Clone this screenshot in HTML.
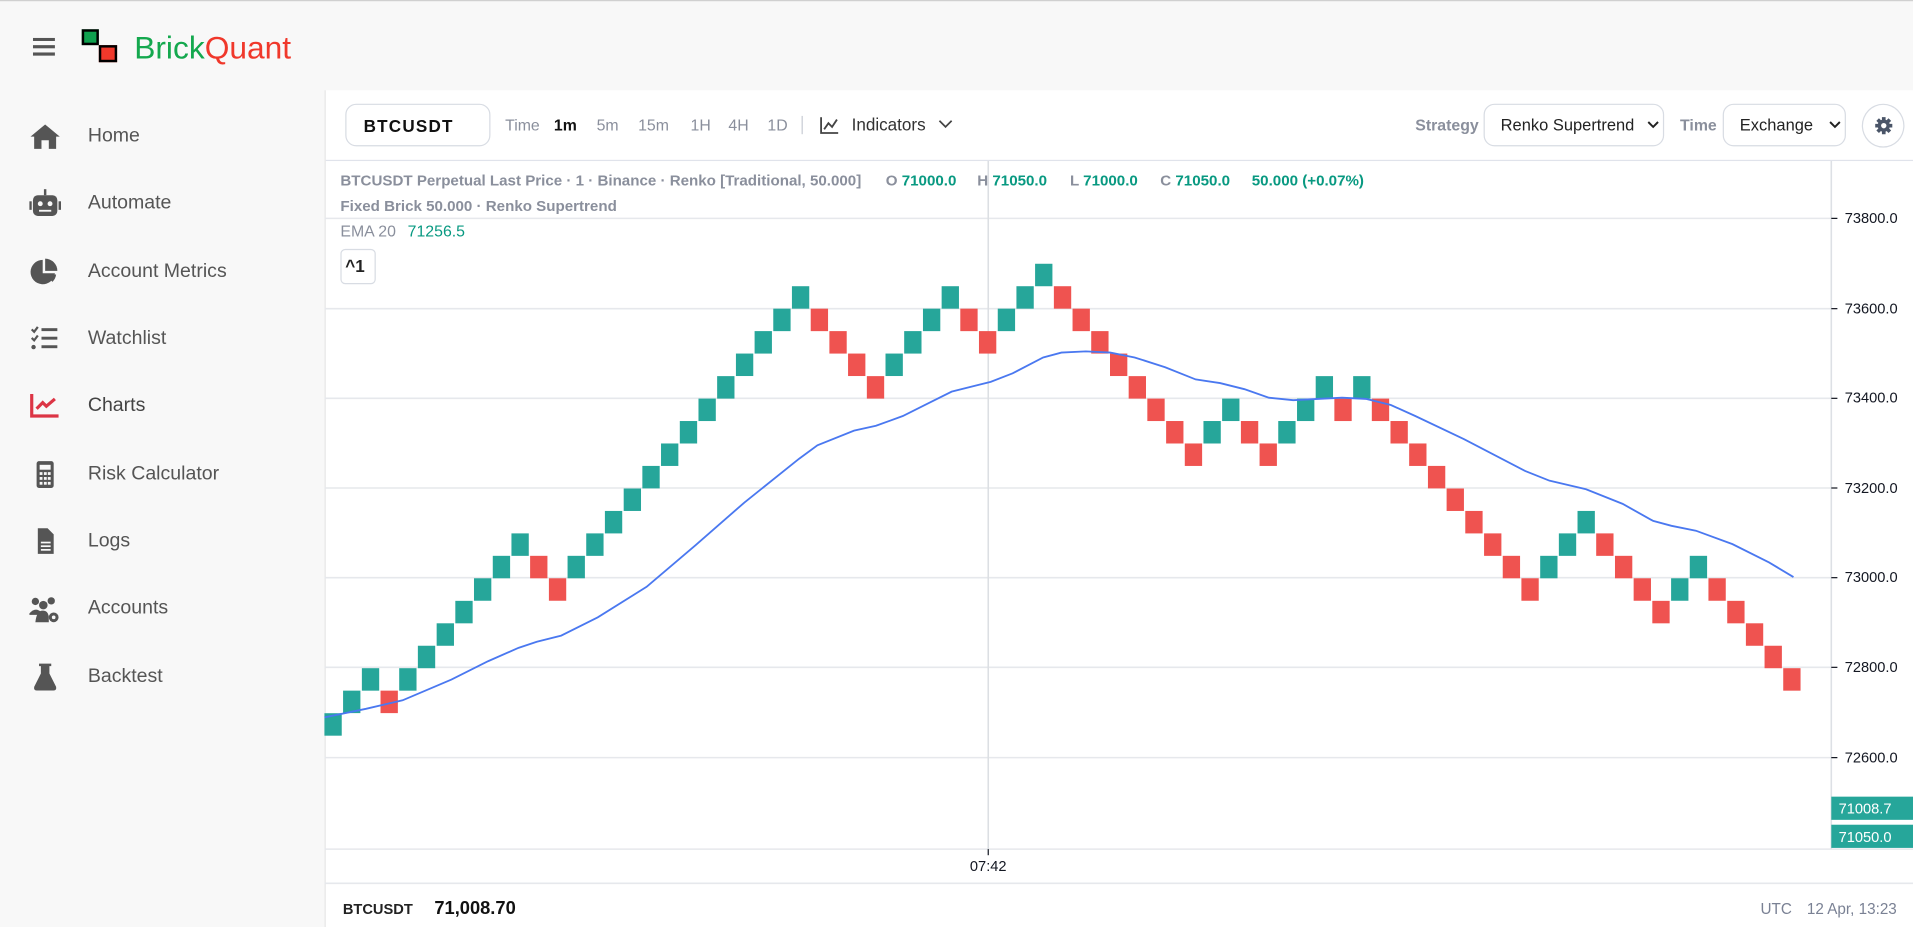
<!DOCTYPE html>
<html><head><meta charset="utf-8"><style>
*{box-sizing:border-box;margin:0;padding:0}
html,body{width:1913px;height:925px;overflow:hidden;background:#f8f8f8;font-family:"Liberation Sans",sans-serif}
#w{position:absolute;left:0;top:0;width:1568px;height:758.2px;transform:scale(1.22005,1.22);transform-origin:0 0;background:#f8f8f8;border-top:1px solid #d0d0d0}
.a{position:absolute;white-space:nowrap}
.nav{position:absolute;left:0;width:260px;height:40px}
.nav .t{position:absolute;left:72px;top:11px;font-size:16px;color:#555}
.nav svg{position:absolute;left:24px;top:8px}
#main{position:absolute;left:266px;top:73px;width:1302px;height:686px;background:#fff;border-left:1px solid #e6e6e6}
.g{color:#8a8f9c}
.tf{position:absolute;top:21px;font-size:13px;color:#8a8f9c}
.sel{position:absolute;top:11px;height:35px;border:1px solid #d8dce3;border-radius:9px;font-size:13.5px;color:#222;padding:9px 0 0 13px}
.leg{position:absolute;font-size:12.4px;font-weight:bold;color:#8a8f9c}
.gr{color:#089981}
</style></head><body><div id="w">
<svg class="a" style="left:27px;top:30px" width="19" height="15"><rect x="0" y="0" width="18" height="2.6" fill="#555"/><rect x="0" y="6" width="18" height="2.6" fill="#555"/><rect x="0" y="12" width="18" height="2.6" fill="#555"/></svg>
<div class="a" style="left:67px;top:23px;width:14px;height:13px;background:#0fa14f;border:2px solid #000"></div>
<div class="a" style="left:81px;top:36px;width:15px;height:14px;background:#f0382b;border:2px solid #000"></div>
<div class="a" style="left:110px;top:22px;font-size:26px;line-height:32px"><span style="color:#14a84e">Brick</span><span style="color:#f0382b">Quant</span></div>
<div class="nav" style="top:91px"><svg width="26" height="24" viewBox="0 0 26 24"><path d="M13 2 L1 12 H4 V22 H10 V15 H16 V22 H22 V12 H25 Z" fill="#555"/></svg><div class="t">Home</div></div>
<div class="nav" style="top:146px"><svg width="26" height="24" viewBox="0 0 26 24"><rect x="12" y="0" width="2" height="5" fill="#555"/><rect x="3" y="5" width="20" height="17" rx="4" fill="#555"/><rect x="0" y="10" width="2" height="7" fill="#555"/><rect x="24" y="10" width="2" height="7" fill="#555"/><circle cx="9" cy="12" r="2" fill="#f8f8f8"/><circle cx="17" cy="12" r="2" fill="#f8f8f8"/><rect x="8" y="17" width="10" height="1.5" fill="#f8f8f8"/></svg><div class="t">Automate</div></div>
<div class="nav" style="top:202px"><svg width="26" height="24" viewBox="0 0 26 24"><path d="M11 2 A10 10 0 1 0 21 13 H11 Z" fill="#555"/><path d="M13 1 A10 10 0 0 1 23 11 H13Z" fill="#555"/><path d="M13 14 H22 A10 10 0 0 1 19 20 Z" fill="#555"/></svg><div class="t">Account Metrics</div></div>
<div class="nav" style="top:257px"><svg width="26" height="24" viewBox="0 0 26 24"><path d="M2 4 L4 6 L7 2" stroke="#555" stroke-width="1.8" fill="none"/><path d="M2 11 L4 13 L7 9" stroke="#555" stroke-width="1.8" fill="none"/><circle cx="3.5" cy="18.5" r="1.8" fill="#555"/><rect x="10" y="3" width="13" height="2.4" fill="#555"/><rect x="10" y="10" width="13" height="2.4" fill="#555"/><rect x="10" y="17" width="13" height="2.4" fill="#555"/></svg><div class="t">Watchlist</div></div>
<div class="nav" style="top:312px"><svg width="26" height="24" viewBox="0 0 26 24"><path d="M2 2 V20 H24" stroke="#dc3545" stroke-width="2.6" fill="none"/><path d="M6 14 L11 9 L14 12 L21 6" stroke="#dc3545" stroke-width="2.6" fill="none"/></svg><div class="t" style="color:#444">Charts</div></div>
<div class="nav" style="top:368px"><svg width="26" height="24" viewBox="0 0 26 24"><rect x="6" y="1" width="14" height="22" rx="2" fill="#555"/><rect x="8.5" y="4" width="9" height="4" fill="#f8f8f8"/><g fill="#f8f8f8"><rect x="8.5" y="10" width="2.3" height="2.3"/><rect x="12" y="10" width="2.3" height="2.3"/><rect x="15.2" y="10" width="2.3" height="2.3"/><rect x="8.5" y="14" width="2.3" height="2.3"/><rect x="12" y="14" width="2.3" height="2.3"/><rect x="15.2" y="14" width="2.3" height="2.3"/><rect x="8.5" y="18" width="2.3" height="2.3"/><rect x="12" y="18" width="2.3" height="2.3"/><rect x="15.2" y="18" width="2.3" height="2.3"/></g></svg><div class="t">Risk Calculator</div></div>
<div class="nav" style="top:423px"><svg width="26" height="24" viewBox="0 0 26 24"><path d="M7 1 H15 L20 6 V22 H7 Z" fill="#555"/><g fill="#f8f8f8"><rect x="9.5" y="12" width="8" height="1.4"/><rect x="9.5" y="15" width="8" height="1.4"/><rect x="9.5" y="18" width="8" height="1.4"/></g></svg><div class="t">Logs</div></div>
<div class="nav" style="top:478px"><svg width="26" height="24" viewBox="0 0 26 24"><circle cx="5" cy="6" r="3" fill="#555"/><circle cx="18" cy="5.5" r="3" fill="#555"/><circle cx="11.5" cy="9" r="3.5" fill="#555"/><path d="M0 16 Q5 10 10 15 V17 H0Z" fill="#555"/><path d="M5 23 Q6 13 11.5 13.5 Q15 13.5 16 18 V23Z" fill="#555"/><circle cx="20" cy="19" r="4" fill="#555"/><circle cx="20" cy="19" r="1.5" fill="#f8f8f8"/></svg><div class="t">Accounts</div></div>
<div class="nav" style="top:534px"><svg width="26" height="24" viewBox="0 0 26 24"><path d="M8 1 H18 V3 H16.5 V9 L22 20 Q22.5 23 20 23 H6 Q3.5 23 4 20 L9.5 9 V3 H8 Z" fill="#555"/></svg><div class="t">Backtest</div></div>
<div id="main">
<div class="a" style="left:16px;top:11px;width:119px;height:35px;border:1px solid #d8dce3;border-radius:9px;font-size:14px;font-weight:bold;letter-spacing:1px;color:#111;padding:9px 0 0 14px">BTCUSDT</div>
<div class="tf" style="left:147px">Time</div>
<div class="tf" style="left:187px;color:#111;font-weight:bold">1m</div>
<div class="tf" style="left:222px">5m</div>
<div class="tf" style="left:256px">15m</div>
<div class="tf" style="left:299px">1H</div>
<div class="tf" style="left:330px">4H</div>
<div class="tf" style="left:362px">1D</div>
<div class="a" style="left:390px;top:21px;width:1px;height:15px;background:#c8ccd4"></div>
<svg class="a" style="left:405px;top:22px" width="16" height="14"><path d="M1 0 V13 H15" stroke="#444" stroke-width="1.5" fill="none"/><path d="M3.5 10 L7 5 L10 8 L14 2" stroke="#444" stroke-width="1.5" fill="none"/></svg>
<div class="tf" style="left:431px;color:#333;font-size:14px;top:20px">Indicators</div>
<svg class="a" style="left:502px;top:24px" width="12" height="8"><path d="M1 1 L6 6 L11 1" stroke="#444" stroke-width="1.4" fill="none"/></svg>
<div class="tf" style="left:893px;font-weight:bold">Strategy</div>
<div class="sel" style="left:949px;width:148px">Renko Supertrend</div>
<svg class="a" style="left:1083px;top:25px" width="10" height="7"><path d="M1 1 L5 5 L9 1" stroke="#222" stroke-width="1.6" fill="none"/></svg>
<div class="tf" style="left:1110px;font-weight:bold">Time</div>
<div class="sel" style="left:1145px;width:101px">Exchange</div>
<svg class="a" style="left:1232px;top:25px" width="10" height="7"><path d="M1 1 L5 5 L9 1" stroke="#222" stroke-width="1.6" fill="none"/></svg>
<div class="a" style="left:1259px;top:11px;width:35px;height:36px;border:1px solid #d8dce3;border-radius:50%"></div>
<svg class="a" style="left:1269px;top:21px" width="16" height="16" viewBox="0 0 16 16"><g fill="#4a5568"><circle cx="8" cy="8" r="5"/><g stroke="#4a5568" stroke-width="3"><path d="M8 1V15M1 8H15M3 3L13 13M13 3L3 13"/></g></g><circle cx="8" cy="8" r="2.2" fill="#fff"/></svg>
<div class="a" style="left:0;top:57px;width:1302px;height:1px;background:#e0e3eb"></div>
</div>
<svg class="a" style="left:0;top:0" width="1568" height="758" id="ch">
<g stroke="#e6e8ec" stroke-width="1.3">
<line x1="266" x2="1501" y1="178" y2="178"/><line x1="266" x2="1501" y1="252" y2="252"/><line x1="266" x2="1501" y1="325.5" y2="325.5"/><line x1="266" x2="1501" y1="399" y2="399"/><line x1="266" x2="1501" y1="472.5" y2="472.5"/><line x1="266" x2="1501" y1="546" y2="546"/><line x1="266" x2="1501" y1="620" y2="620"/>
<line x1="266" x2="1568" y1="695" y2="695"/><line x1="266" x2="1568" y1="723" y2="723"/>
<line x1="1501" x2="1501" y1="131" y2="695" stroke="#dde0e5"/>
<line x1="810" x2="810" y1="131" y2="695" stroke="#dcdfe3"/>
</g>
<g font-size="12" fill="#131722" font-family="Liberation Sans">
<text x="1512" y="182">73800.0</text><text x="1512" y="256">73600.0</text><text x="1512" y="329">73400.0</text><text x="1512" y="403">73200.0</text><text x="1512" y="476">73000.0</text><text x="1512" y="550">72800.0</text><text x="1512" y="624">72600.0</text>
<text x="795" y="713">07:42</text>
</g>
<g stroke="#131722"><line x1="1501" x2="1506" y1="178" y2="178"/><line x1="1501" x2="1506" y1="252" y2="252"/><line x1="1501" x2="1506" y1="325.5" y2="325.5"/><line x1="1501" x2="1506" y1="399" y2="399"/><line x1="1501" x2="1506" y1="472.5" y2="472.5"/><line x1="1501" x2="1506" y1="546" y2="546"/><line x1="1501" x2="1506" y1="620" y2="620"/><line x1="810" x2="810" y1="695" y2="700"/></g>
<g id="bricks"></g>
<polyline fill="none" stroke="#4a78f0" stroke-width="1.5" points="266,587 300,580 330,573 370,556 400,541 425,530 440,525 460,520 490,505 530,480 570,446 610,411 655,375 670,364 700,352 718,348 740,340 760,330 780,320 800,315 812,312 830,305 855,292 870,288 890,287 910,288 930,292 955,300 980,310 1000,313 1020,318 1040,325 1060,327 1080,326 1100,325 1120,326 1140,331 1160,340 1200,359 1250,385 1270,393 1300,400 1330,412 1355,426 1370,430 1390,434 1420,445 1450,460 1470,472"/>
<rect x="1501" y="652" width="67" height="19" fill="#26a69a"/><rect x="1501" y="675" width="67" height="19" fill="#26a69a"/>
<g fill="#fff" font-size="12" font-family="Liberation Sans"><text x="1507" y="666">71008.7</text><text x="1507" y="689">71050.0</text></g>
</svg>
<div class="leg" style="left:279px;top:140px">BTCUSDT Perpetual Last Price · 1 · Binance · Renko [Traditional, 50.000]</div>
<div class="leg" style="left:726px;top:140px">O <span class="gr">71000.0</span></div>
<div class="leg" style="left:801px;top:140px">H <span class="gr">71050.0</span></div>
<div class="leg" style="left:877px;top:140px">L <span class="gr">71000.0</span></div>
<div class="leg" style="left:951px;top:140px">C <span class="gr">71050.0</span></div>
<div class="leg gr" style="left:1026px;top:140px">50.000 (+0.07%)</div>
<div class="leg" style="left:279px;top:161px">Fixed Brick 50.000 · Renko Supertrend</div>
<div class="a" style="left:279px;top:181px;font-size:13px;color:#8a8f9c">EMA 20 <span class="gr" style="margin-left:6px">71256.5</span></div>
<div class="a" style="left:279px;top:203px;width:29px;height:29px;border:1px solid #d8dce3;border-radius:4px;background:#fff;font-size:14px;font-weight:bold;color:#222;padding:5px 0 0 3px">^1</div>
<div class="a" style="left:281px;top:737px;font-size:12px;font-weight:bold;color:#222">BTCUSDT</div>
<div class="a" style="left:356px;top:735px;font-size:15px;font-weight:bold;color:#111">71,008.70</div>
<div class="a" style="left:1443px;top:737px;font-size:12.5px;color:#7a8194">UTC</div>
<div class="a" style="left:1481px;top:737px;font-size:12.5px;color:#7a8194">12 Apr, 13:23</div>
</div>
<script>
var s="G0 G1 G2 R1 G2 G3 G4 G5 G6 G7 G8 R7 R6 G7 G8 G9 G10 G11 G12 G13 G14 G15 G16 G17 G18 G19 R18 R17 R16 R15 G16 G17 G18 G19 R18 R17 G18 G19 G20 R19 R18 R17 R16 R15 R14 R13 R12 G13 G14 R13 R12 G13 G14 G15 R14 G15 R14 R13 R12 R11 R10 R9 R8 R7 R6 G7 G8 G9 R8 R7 R6 R5 G6 G7 R6 R5 R4 R3 R2".split(" ");
var h="";s.forEach(function(b,i){var c=b[0]=="G"?"#26a69a":"#ef5350";var l=+b.slice(1);var yb=252+(19-l)*18.42;var x=273+i*15.33;h+='<rect x="'+(x-7.1).toFixed(1)+'" y="'+(yb-18.42).toFixed(1)+'" width="14.2" height="18.42" fill="'+c+'"/>';});
document.getElementById("bricks").innerHTML=h;
</script>
</body></html>
